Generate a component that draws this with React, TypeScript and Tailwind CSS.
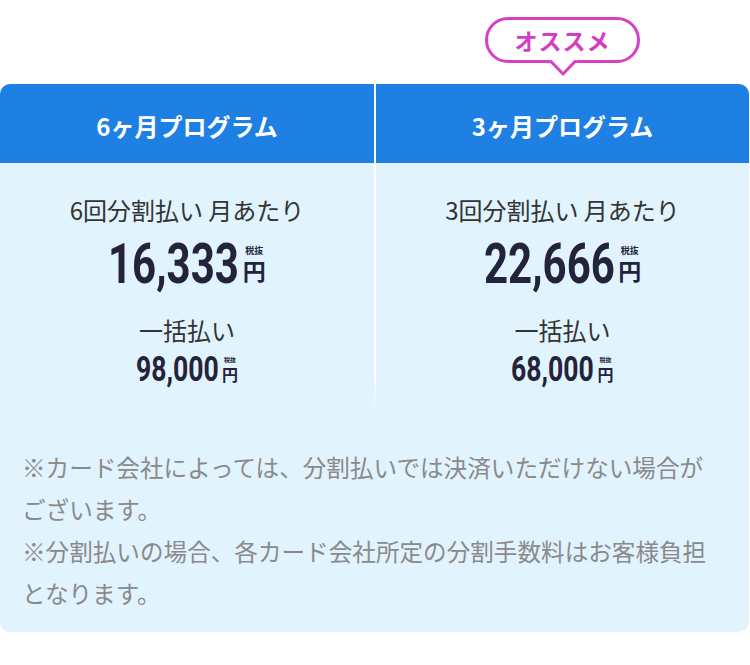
import React from "react";

const jp = { fontFamily: '"Noto Sans CJK JP", "Noto Sans", sans-serif' };

function Price({ value, big }: { value: string; big: boolean }) {
  if (big) {
    return (
      <div className="flex items-end justify-center h-[56px]">
        <span
          className="inline-block origin-left scale-x-[0.75] mr-[-42px] text-[56px] leading-[56px] font-bold text-[#23233b]"
          style={{ fontFamily: "Roboto, sans-serif" }}
        >
          {value}
        </span>
        <span className="flex flex-col items-center mb-[10px] ml-[2px] text-[#23233b] font-bold" style={jp}>
          <span className="text-[9px] leading-[9px]">税抜</span>
          <span className="text-[23px] leading-[23px] mt-[4px]">円</span>
        </span>
      </div>
    );
  }
  return (
    <div className="flex items-end justify-center h-[35px]">
      <span
        className="inline-block origin-left scale-x-[0.76] mr-[-25px] text-[35px] leading-[35px] font-bold text-[#23233b]"
        style={{ fontFamily: "Roboto, sans-serif" }}
      >
        {value}
      </span>
      <span className="flex flex-col items-center mb-[5px] ml-[2px] text-[#23233b] font-bold" style={jp}>
        <span className="text-[6px] leading-[6px]">税抜</span>
        <span className="text-[16px] leading-[16px] mt-[3px]">円</span>
      </span>
    </div>
  );
}

function Column({ times, monthly, total }: { times: string; monthly: string; total: string }) {
  return (
    <div className="flex flex-col items-center pt-[31px] pb-[23px]" style={jp}>
      <div className="text-[24px] leading-[32px] text-[#333333]">{times}回分割払い 月あたり</div>
      <div className="mt-[10px]">
        <Price value={monthly} big />
      </div>
      <div className="mt-[22px] text-[24px] leading-[32px] text-[#333333]">一括払い</div>
      <div className="mt-[6px]">
        <Price value={total} big={false} />
      </div>
    </div>
  );
}

export default function App() {
  return (
    <div className="w-[750px] h-[665px] bg-white pt-[17px]" style={jp}>
      <div className="grid grid-cols-[376px_373px] h-[67px]">
        <div />
        <div className="flex justify-center">
          <div className="relative w-[155px] h-[46px] rounded-full border-[3px] border-[#d93ec6] bg-white flex items-center justify-center">
            <span className="text-[23px] leading-none font-bold text-[#d43cc1] tracking-[1px]">オススメ</span>
            <svg
              className="absolute left-1/2 -translate-x-1/2 top-[40px]"
              width="30"
              height="18"
              viewBox="0 0 30 18"
            >
              <polygon points="1,0 29,0 15,14" fill="#ffffff" />
              <polyline points="2,0.5 15,14 28,0.5" fill="none" stroke="#d93ec6" strokeWidth="3" strokeLinejoin="round" />
            </svg>
          </div>
        </div>
      </div>
      <div className="w-[749px] rounded-[10px] overflow-hidden bg-[#e1f3fd]">
        <div className="grid grid-cols-[374px_2px_373px] h-[79px] bg-[#1f80e3]">
          <div className="flex items-center justify-center text-white text-[24px] font-bold pt-[4px]">6ヶ月プログラム</div>
          <div className="bg-white" />
          <div className="flex items-center justify-center text-white text-[24px] font-bold pt-[4px]">3ヶ月プログラム</div>
        </div>
        <div className="grid grid-cols-[374px_2px_373px]">
          <Column times="6" monthly="16,333" total="98,000" />
          <div className="bg-gradient-to-b from-white from-85% to-transparent" />
          <Column times="3" monthly="22,666" total="68,000" />
        </div>
        <div className="pl-[22px] pt-[36px] pb-[18px] text-[23.6px] leading-[42px] text-[#8a8a8a] whitespace-nowrap">
          ※カード会社によっては、分割払いでは決済いただけない場合が
          <br />
          ございます。
          <br />
          ※分割払いの場合、各カード会社所定の分割手数料はお客様負担
          <br />
          となります。
        </div>
      </div>
    </div>
  );
}
